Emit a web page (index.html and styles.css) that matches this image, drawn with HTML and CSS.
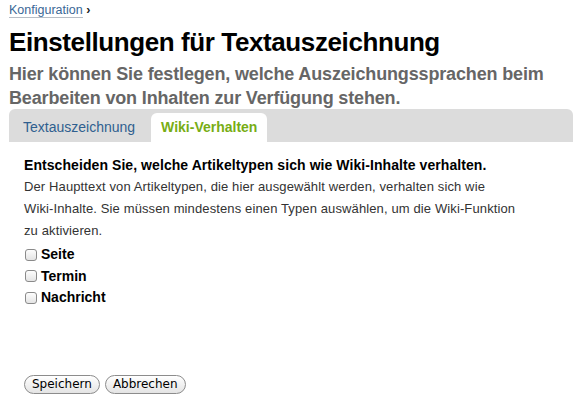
FILE: index.html
```html
<!DOCTYPE html>
<html lang="de">
<head>
<meta charset="utf-8">
<link rel="stylesheet" href="styles.css">
</head>
<body>
<div class="page">
  <div class="crumbs"><a class="crumb" href="#">Konfiguration</a> <span class="sep">›</span></div>
  <h1 class="title">Einstellungen für Textauszeichnung</h1>
  <p class="lead">Hier können Sie festlegen, welche Auszeichungssprachen beim Bearbeiten von Inhalten zur Verfügung stehen.</p>
  <div class="tabs">
    <a class="tab" href="#">Textauszeichnung</a>
    <a class="tab active" href="#">Wiki-Verhalten</a>
  </div>
  <div class="panel">
    <p class="q">Entscheiden Sie, welche Artikeltypen sich wie Wiki-Inhalte verhalten.</p>
    <p class="desc">Der Haupttext von Artikeltypen, die hier ausgewählt werden, verhalten sich wie Wiki&#8209;Inhalte. Sie müssen mindestens einen Typen auswählen, um die Wiki&#8209;Funktion zu aktivieren.</p>
    <ul class="opts">
      <li><label class="opt"><span class="box"></span>Seite</label></li>
      <li><label class="opt"><span class="box"></span>Termin</label></li>
      <li><label class="opt"><span class="box"></span>Nachricht</label></li>
    </ul>
    <div class="actions">
      <button class="btn">Speichern</button>
      <button class="btn">Abbrechen</button>
    </div>
  </div>
</div>
</body>
</html>
```
FILE: styles.css
```css
html, body {
  margin: 0;
  padding: 0;
  background: #fff;
}
body {
  font-family: "Liberation Sans", Arial, sans-serif;
  color: #000;
}
.page {
  padding: 3px 8px 0 9px;
}
.crumbs {
  font-size: 12.5px;
  line-height: 15px;
  color: #222;
}
.crumb {
  color: #3a6796;
  text-decoration: none;
  border-bottom: 1px solid #b8bec6;
}
.sep {
  font-weight: bold;
}
.title {
  margin: 8px 0 0 0;
  font-size: 26px;
  line-height: 32px;
  font-weight: bold;
  letter-spacing: -0.4px;
}
.lead {
  margin: 4px 0 0 0;
  font-size: 18px;
  line-height: 24px;
  font-weight: bold;
  letter-spacing: -0.15px;
  color: #666;
}
.tabs {
  margin-top: -1px;
  background: #dcdcdc;
  border-radius: 6px 6px 0 0;
  height: 33px;
  display: flex;
  align-items: flex-end;
  padding-left: 14px;
  gap: 16px;
}
.tab {
  font-size: 14px;
  line-height: 29px;
  text-decoration: none;
  color: #2f5f8f;
}
.tab.active {
  background: #fff;
  color: #78ad14;
  font-weight: bold;
  border-radius: 6px 6px 0 0;
  padding: 0 10px;
}
.panel {
  padding: 14px 15px 0 15px;
}
.q {
  margin: 0;
  font-size: 14px;
  line-height: 18px;
  font-weight: bold;
  letter-spacing: 0.07px;
}
.desc {
  margin: 2px 0 0 0;
  max-width: 500px;
  font-size: 13px;
  line-height: 22px;
  letter-spacing: 0.12px;
  color: #333;
}
.opts {
  list-style: none;
  margin: 2px 0 0 0;
  padding: 0;
}
.opt {
  display: flex;
  align-items: center;
  gap: 4px;
  font-size: 14px;
  line-height: 21.5px;
  font-weight: bold;
  padding-left: 1px;
}
.box {
  width: 12px;
  height: 12px;
  border: 1px solid #8a8a8a;
  border-radius: 3px;
  background: linear-gradient(#fdfdfd, #e4e4e4);
  box-sizing: border-box;
}
.actions {
  margin-top: 66px;
  display: flex;
  gap: 5px;
}
.btn {
  font-family: "DejaVu Sans", "Liberation Sans", sans-serif;
  font-size: 12px;
  height: 19px;
  padding: 0 7px;
  border: 1px solid #8c8c8c;
  border-radius: 10px;
  background: linear-gradient(#ffffff, #e4e4e4);
  color: #000;
  line-height: 17px;
}
```
